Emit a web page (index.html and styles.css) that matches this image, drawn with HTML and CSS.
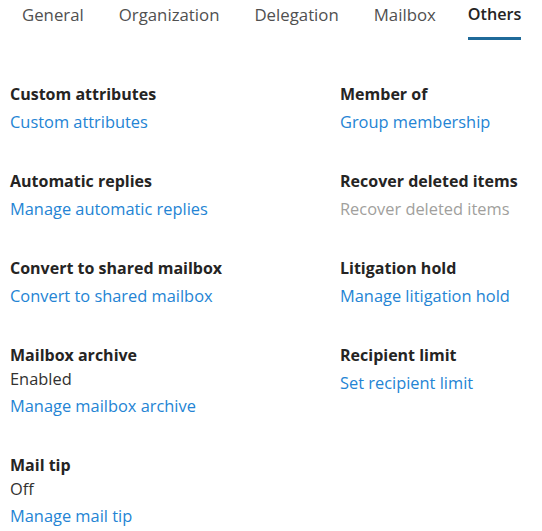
FILE: index.html
```html
<!DOCTYPE html>
<html>
<head>
<meta charset="utf-8">
<link rel="stylesheet" href="styles.css">
</head>
<body>
<nav class="tabs">
  <div class="tab">General</div>
  <div class="tab">Organization</div>
  <div class="tab">Delegation</div>
  <div class="tab">Mailbox</div>
  <div class="tab active">Others</div>
</nav>
<main class="grid">
  <section class="item">
    <div class="heading">Custom attributes</div>
    <a class="link">Custom attributes</a>
  </section>
  <section class="item">
    <div class="heading">Member of</div>
    <a class="link">Group membership</a>
  </section>
  <section class="item">
    <div class="heading">Automatic replies</div>
    <a class="link">Manage automatic replies</a>
  </section>
  <section class="item">
    <div class="heading">Recover deleted items</div>
    <a class="link disabled">Recover deleted items</a>
  </section>
  <section class="item">
    <div class="heading">Convert to shared mailbox</div>
    <a class="link">Convert to shared mailbox</a>
  </section>
  <section class="item">
    <div class="heading">Litigation hold</div>
    <a class="link">Manage litigation hold</a>
  </section>
  <section class="item">
    <div class="heading">Mailbox archive</div>
    <div class="value">Enabled</div>
    <a class="link">Manage mailbox archive</a>
  </section>
  <section class="item">
    <div class="heading">Recipient limit</div>
    <a class="link">Set recipient limit</a>
  </section>
  <section class="item">
    <div class="heading">Mail tip</div>
    <div class="value">Off</div>
    <a class="link">Manage mail tip</a>
  </section>
</main>
</body>
</html>
```
FILE: styles.css
```css
html, body {
  margin: 0;
  padding: 0;
  background: #ffffff;
  overflow: hidden;
}
body {
  font-family: "Open Sans", "Noto Sans", sans-serif;
  font-size: 16px;
  color: #323130;
}
.tabs {
  display: flex;
  padding-left: 22px;
  gap: 35px;
  height: 40px;
}
.tab {
  height: 37px;
  line-height: 29px;
  color: #505050;
  font-size: 16.8px;
  border-bottom: 3px solid transparent;
}
.tab.active {
  margin-left: -3px;
  font-size: 16.2px;
  font-weight: 600;
  color: #252423;
  border-bottom-color: #1f6a99;
}
.grid {
  display: grid;
  grid-template-columns: 330px 1fr;
  padding-left: 10px;
  margin-top: 42px;
}
.item {
  display: flex;
  flex-direction: column;
  align-items: flex-start;
  padding-bottom: 36px;
}
.heading {
  font-weight: 700;
  line-height: 24px;
  color: #252423;
}
.value {
  font-size: 16.4px;
  line-height: 23px;
  color: #323130;
}
.link {
  margin-top: 4px;
  font-size: 16.4px;
  line-height: 23px;
  color: #2484d4;
}
.link.disabled {
  color: #a19f9d;
}
```
